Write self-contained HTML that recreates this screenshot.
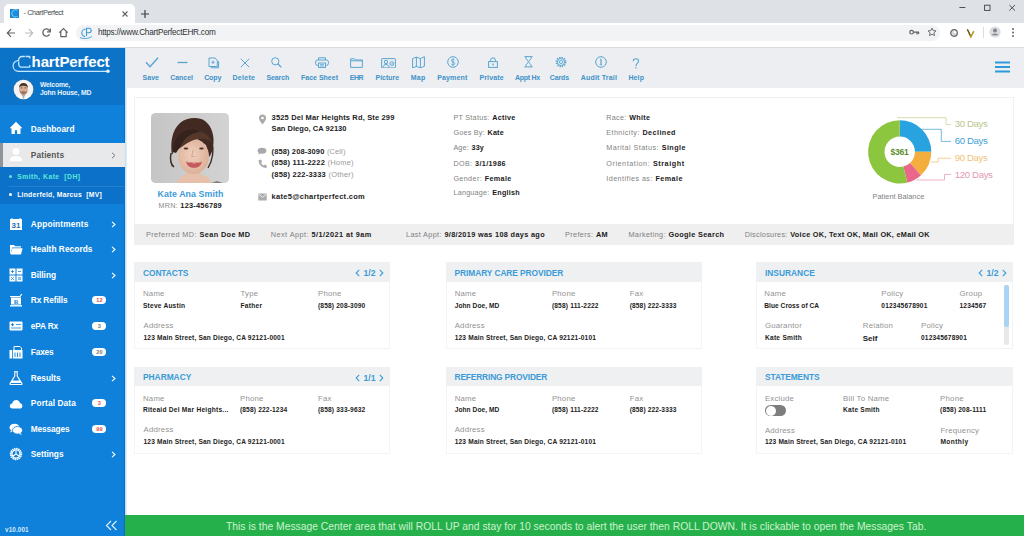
<!DOCTYPE html>
<html><head><meta charset="utf-8">
<style>
*{margin:0;padding:0;box-sizing:border-box}
html,body{width:1024px;height:536px;overflow:hidden;background:#fff;font-family:"Liberation Sans",sans-serif}
.a{position:absolute;white-space:nowrap}
#tabbar{position:absolute;left:0;top:0;width:1024px;height:23px;background:#dee1e6}
#tab{position:absolute;left:4px;top:4px;width:131px;height:19px;background:#fff;border-radius:5px 5px 0 0}
#addr{position:absolute;left:0;top:23px;width:1024px;height:25px;background:#fff;border-bottom:1px solid #d9dbde}
#url{position:absolute;left:76px;top:24.5px;width:864px;height:16px;background:#f1f3f4;border-radius:8px}
#side{position:absolute;left:0;top:48px;width:125px;height:488px;background:#0f81db}
#sidehead{position:absolute;left:0;top:48px;width:125px;height:57px;background:#0c74c8}
#toolbar{position:absolute;left:125px;top:48px;width:899px;height:40px;background:#edeef1}
.tl{position:absolute;top:73px;font-size:7.5px;font-weight:bold;color:#3b9ad6;transform:translateX(-50%)}
.nav{position:absolute;left:31px;font-size:8.5px;font-weight:bold;color:#fff}
.chev{position:absolute;left:111px;width:5px;height:5px;border-right:1.3px solid #fff;border-top:1.3px solid #fff;transform:rotate(45deg)}
.badge{position:absolute;left:92px;width:14px;height:9px;border-radius:5px;background:#fff;color:#d9534f;font-size:6px;font-weight:bold;text-align:center;line-height:9px}
.lab{color:#8a8a8a}
.val{color:#111;font-weight:bold}
.pi{position:absolute;font-size:8px;white-space:nowrap}
.card{position:absolute;background:#fff;border:1px solid #f0f0f0}
.ch{position:absolute;left:0;top:0;right:0;height:19px;background:#eff0f2}
.ct{position:absolute;left:8px;top:5px;font-size:8.5px;font-weight:bold;color:#3a9ad9}
.cl{position:absolute;font-size:7.5px;color:#9a9a9a;white-space:nowrap}
.cv{position:absolute;font-size:7px;color:#111;font-weight:bold;white-space:nowrap}
.pg{position:absolute;top:4px;font-size:8.5px;font-weight:bold;color:#3a9ad9}
.t{position:absolute;white-space:nowrap;line-height:0}
</style></head><body>
<div id="tabbar"></div>
<div id="tab"></div>
<div id="addr"></div>
<div id="url"></div>

<!-- browser chrome -->
<svg class="a" style="left:10px;top:9px" width="9" height="9" viewBox="0 0 9 9"><rect width="9" height="9" fill="#1f86cf"/><circle cx="5.2" cy="3.9" r="2.6" fill="#1a8fe0"/><path d="M7.6 1.5A3.6 3.6 0 1 0 7.8 7.2" stroke="#62c9f4" stroke-width="1.1" fill="none"/></svg>
<div class="t" style="left:23.6px;top:13.2px;font-size:7.3px;color:#4a4d50;letter-spacing:-0.42px">- ChartPerfect</div>
<svg class="a" style="left:121px;top:10px" width="8" height="8" viewBox="0 0 8 8"><path d="M1.5 1.5l5 5M6.5 1.5l-5 5" stroke="#5f6368" stroke-width="1.1"/></svg>
<svg class="a" style="left:140px;top:9px" width="10" height="10" viewBox="0 0 10 10"><path d="M5 1v8M1 5h8" stroke="#3c4043" stroke-width="1.2"/></svg>
<svg class="a" style="left:6px;top:28px" width="10" height="10" viewBox="0 0 10 10"><path d="M9 5H1.5M5 1.2L1.3 5 5 8.8" stroke="#5f6368" stroke-width="1.2" fill="none"/></svg>
<svg class="a" style="left:24px;top:28px" width="10" height="10" viewBox="0 0 10 10"><path d="M1 5h7.5M5 1.2L8.7 5 5 8.8" stroke="#b8babd" stroke-width="1.2" fill="none"/></svg>
<svg class="a" style="left:41px;top:27px" width="11" height="11" viewBox="0 0 11 11"><path d="M8.8 4.2A3.6 3.6 0 1 0 8.6 7.2" stroke="#5f6368" stroke-width="1.3" fill="none"/><path d="M9.3 1.5v3.3H6" stroke="#5f6368" stroke-width="1.3" fill="none"/></svg>
<svg class="a" style="left:58px;top:27px" width="11" height="11" viewBox="0 0 11 11"><path d="M1.3 5.6L5.5 1.6 9.7 5.6M2.8 4.5V9.6H8.2V4.5" stroke="#5f6368" stroke-width="1.2" fill="none"/></svg>
<svg class="a" style="left:79px;top:27px" width="15" height="12" viewBox="0 0 15 12"><path d="M6.5 2.3A3.6 3.6 0 1 0 6.3 9.5" stroke="#3d9ad8" stroke-width="1.1" fill="none"/><path d="M7.5 9V1.3h2.5a2.2 2.2 0 0 1 0 4.4H7.5" stroke="#3d9ad8" stroke-width="1.1" fill="none"/><path d="M1 10.5c3 1.5 8 1.5 12-1" stroke="#3d9ad8" stroke-width="0.9" fill="none"/></svg>
<div class="t" style="left:97.9px;top:32.9px;font-size:8.2px;color:#303134;letter-spacing:-0.24px">https://www.ChartPerfectEHR.com</div>
<svg class="a" style="left:909px;top:29px" width="11" height="7" viewBox="0 0 11 7"><circle cx="2.6" cy="3.2" r="1.8" stroke="#5f6368" stroke-width="1.2" fill="none"/><path d="M4.4 3.2H10M8 3.2v2.2M9.6 3.2v1.8" stroke="#5f6368" stroke-width="1.2"/></svg>
<svg class="a" style="left:927px;top:27px" width="10" height="10" viewBox="0 0 10 10"><path d="M5 1l1.2 2.6 2.8.3-2.1 1.9.6 2.8L5 7.2 2.5 8.6l.6-2.8L1 3.9l2.8-.3z" stroke="#5f6368" stroke-width="0.9" fill="none"/></svg>
<svg class="a" style="left:950px;top:28.5px" width="8" height="8" viewBox="0 0 8 8"><circle cx="4" cy="4" r="3.3" stroke="#606368" stroke-width="1.2" fill="#d5d7da"/><path d="M4.3 1.6a2.5 2.5 0 0 1 2.1 2.6L4 4z" fill="#fff"/></svg>
<svg class="a" style="left:966px;top:27.5px" width="9" height="10" viewBox="0 0 9 10"><path d="M1.5 1.5l3.3 7.5L7.8 3.2" stroke="#b89a2c" stroke-width="1.6" fill="none"/><path d="M1.3 1.3l3 6" stroke="#5e5330" stroke-width="1.1" fill="none"/></svg>
<div class="a" style="left:983px;top:27px;width:1px;height:11px;background:#dadce0"></div>
<svg class="a" style="left:989px;top:26px" width="12" height="12" viewBox="0 0 12 12"><circle cx="6" cy="6" r="5.6" fill="#dadce0"/><circle cx="6" cy="4.5" r="2" fill="#80868b"/><path d="M2.4 9.3a4 3 0 0 1 7.2 0" fill="#80868b"/></svg>
<svg class="a" style="left:1011px;top:27px" width="4" height="11" viewBox="0 0 4 11"><circle cx="2" cy="2" r="1" fill="#5f6368"/><circle cx="2" cy="5.5" r="1" fill="#5f6368"/><circle cx="2" cy="9" r="1" fill="#5f6368"/></svg>
<svg class="a" style="left:955px;top:2px" width="64" height="12" viewBox="0 0 64 12"><path d="M4.4 5.5h6" stroke="#3c4043" stroke-width=".9"/><rect x="29.6" y="3.2" width="5.4" height="5.2" stroke="#3c4043" stroke-width=".9" fill="none"/><path d="M54.4 3l5.6 5.6M60 3l-5.6 5.6" stroke="#3c4043" stroke-width=".9"/></svg>
<div id="toolbar"></div>
<svg class="a" style="left:144.50px;top:57.40px" width="14" height="11" viewBox="0 0 14 11"><path d="M1 5.2L5 9.6 13 .8" stroke="#58a5d2" stroke-width="1.4" fill="none"/></svg>
<svg class="a" style="left:176.70px;top:60.80px" width="11" height="3" viewBox="0 0 11 3"><path d="M0.5 1.5h10" stroke="#58a5d2" stroke-width="1.3"/></svg>
<svg class="a" style="left:208.00px;top:56.60px" width="12" height="12" viewBox="0 0 12 12"><path d="M1 1h6l2.3 2.3V9.5H1z" stroke="#58a5d2" stroke-width="1" fill="none"/><path d="M2.8 10.8h7.8V4.2" stroke="#58a5d2" stroke-width="1" fill="none"/><path d="M5 3.5v3.5M3.3 5.2h3.4" stroke="#58a5d2" stroke-width=".9"/></svg>
<svg class="a" style="left:239.60px;top:57.60px" width="10" height="10" viewBox="0 0 10 10"><path d="M.8 .8l8.4 8.4M9.2 .8L.8 9.2" stroke="#58a5d2" stroke-width="1"/></svg>
<svg class="a" style="left:271.30px;top:57.30px" width="11" height="11" viewBox="0 0 11 11"><circle cx="4.3" cy="4.3" r="3.6" stroke="#58a5d2" stroke-width="1" fill="none"/><path d="M6.8 6.8l3.6 3.6" stroke="#58a5d2" stroke-width="1.3"/></svg>
<svg class="a" style="left:314.50px;top:57.00px" width="14" height="11" viewBox="0 0 14 11"><path d="M3.5 3V.8h7V3" stroke="#58a5d2" stroke-width="1" fill="none"/><rect x=".6" y="3" width="12.8" height="5.4" rx="2" stroke="#58a5d2" stroke-width="1" fill="none"/><rect x="3.5" y="6" width="7" height="4.4" stroke="#58a5d2" stroke-width="1" fill="#eceef1"/><path d="M5 7.6h4M5 9h4" stroke="#58a5d2" stroke-width=".8"/></svg>
<svg class="a" style="left:349.80px;top:57.80px" width="13" height="10" viewBox="0 0 13 10"><path d="M.6 .8h4l1 1.2h6.8v7.4H.6z" stroke="#58a5d2" stroke-width="1" fill="none"/><path d="M.6 2.8h11.8" stroke="#58a5d2" stroke-width="1"/></svg>
<svg class="a" style="left:380.50px;top:57.55px" width="15" height="10.5" viewBox="0 0 15 10.5"><rect x=".6" y=".6" width="13.8" height="9.3" rx=".6" stroke="#58a5d2" stroke-width="1" fill="none"/><circle cx="5" cy="4" r="1.7" stroke="#58a5d2" stroke-width="1" fill="none"/><path d="M2 9.5c.3-2 1.4-3 3-3s2.7 1 3 3" stroke="#58a5d2" stroke-width="1" fill="none"/><circle cx="10.8" cy="5.6" r="1.9" stroke="#58a5d2" stroke-width="1" fill="none"/><path d="M10 5.6l.6.6 1-1" stroke="#58a5d2" stroke-width=".8" fill="none"/></svg>
<svg class="a" style="left:411.80px;top:55.55px" width="13" height="12.5" viewBox="0 0 13 12.5"><path d="M.6 2.6l3.8-1.5 4 1.5 4-1.9v9.5l-4 1.8-4-1.6-3.8 1.6z" stroke="#58a5d2" stroke-width="1" fill="none"/><path d="M4.4 1.1v9.7M8.4 2.6v9.5" stroke="#58a5d2" stroke-width="1"/></svg>
<svg class="a" style="left:447.00px;top:56.40px" width="12" height="12" viewBox="0 0 12 12"><circle cx="6" cy="6" r="5.3" stroke="#58a5d2" stroke-width="1" fill="none"/><path d="M7.6 4.3c-.3-.7-.9-1-1.6-1-1 0-1.7.5-1.7 1.3 0 1.8 3.5 1 3.5 2.9 0 .8-.8 1.4-1.8 1.4-.8 0-1.5-.4-1.8-1.1M6 2.2v7.6" stroke="#58a5d2" stroke-width=".9" fill="none"/></svg>
<svg class="a" style="left:487.50px;top:56.90px" width="10" height="11" viewBox="0 0 10 11"><rect x=".6" y="4.6" width="8.8" height="5.8" stroke="#58a5d2" stroke-width="1" fill="none"/><path d="M2.6 4.6V3.2a2.4 2.4 0 0 1 4.8 0v1.4" stroke="#58a5d2" stroke-width="1" fill="none"/><path d="M5 6.6v2" stroke="#58a5d2" stroke-width="1.3"/></svg>
<svg class="a" style="left:524.30px;top:56.45px" width="9" height="11.5" viewBox="0 0 9 11.5"><path d="M.5 .6h8M.5 10.9h8M1.6 .8c0 3 2.9 3.8 2.9 4.9S1.6 7.7 1.6 10.7M7.4 .8c0 3-2.9 3.8-2.9 4.9s2.9 2 2.9 5" stroke="#58a5d2" stroke-width="1" fill="none"/></svg>
<svg class="a" style="left:554.50px;top:56.10px" width="12" height="12" viewBox="0 0 12 12"><circle cx="6" cy="6" r="4.4" stroke="#58a5d2" stroke-width="2" fill="none" stroke-dasharray="1.3 1"/><circle cx="6" cy="6" r="3.5" stroke="#58a5d2" stroke-width=".9" fill="none"/><circle cx="6" cy="6" r="1.6" stroke="#58a5d2" stroke-width=".9" fill="none"/></svg>
<svg class="a" style="left:594.70px;top:56.10px" width="12" height="12" viewBox="0 0 12 12"><circle cx="6" cy="6" r="5.3" stroke="#58a5d2" stroke-width="1" fill="none"/><path d="M6 3.2v5.6" stroke="#58a5d2" stroke-width="1.2"/><path d="M5 3.2h1.4M4.8 8.8h2.4" stroke="#58a5d2" stroke-width=".8"/></svg>
<svg class="a" style="left:631.80px;top:57.50px" width="8" height="11" viewBox="0 0 8 11"><path d="M1.2 3.2C1.2 1.7 2.3.7 3.9.7s2.7 1 2.7 2.4c0 2-2.6 2.4-2.6 4.5v.7" stroke="#58a5d2" stroke-width="1.1" fill="none"/><circle cx="4" cy="9.9" r=".75" fill="#58a5d2"/></svg>
<div class="t" style="left:142.60px;top:77.60px;font-size:7.0px;font-weight:bold;color:#3d92c8;letter-spacing:0.013px;">Save</div>
<div class="t" style="left:170.20px;top:77.60px;font-size:7.0px;font-weight:bold;color:#3d92c8;letter-spacing:-0.026px;">Cancel</div>
<div class="t" style="left:204.20px;top:77.60px;font-size:7.0px;font-weight:bold;color:#3d92c8;letter-spacing:-0.125px;">Copy</div>
<div class="t" style="left:232.50px;top:77.60px;font-size:7.0px;font-weight:bold;color:#3d92c8;letter-spacing:0.282px;">Delete</div>
<div class="t" style="left:266.40px;top:77.60px;font-size:7.0px;font-weight:bold;color:#3d92c8;letter-spacing:-0.075px;">Search</div>
<div class="t" style="left:301.00px;top:77.60px;font-size:7.0px;font-weight:bold;color:#3d92c8;letter-spacing:0.004px;">Face Sheet</div>
<div class="t" style="left:349.70px;top:77.60px;font-size:7.0px;font-weight:bold;color:#3d92c8;letter-spacing:-0.426px;">EHR</div>
<div class="t" style="left:375.50px;top:77.60px;font-size:7.0px;font-weight:bold;color:#3d92c8;letter-spacing:-0.033px;">Picture</div>
<div class="t" style="left:410.80px;top:77.60px;font-size:7.0px;font-weight:bold;color:#3d92c8;letter-spacing:0.233px;">Map</div>
<div class="t" style="left:437.20px;top:77.60px;font-size:7.0px;font-weight:bold;color:#3d92c8;letter-spacing:0.146px;">Payment</div>
<div class="t" style="left:479.40px;top:77.60px;font-size:7.0px;font-weight:bold;color:#3d92c8;letter-spacing:0.165px;">Private</div>
<div class="t" style="left:515.00px;top:77.60px;font-size:7.0px;font-weight:bold;color:#3d92c8;letter-spacing:-0.290px;">Appt Hx</div>
<div class="t" style="left:549.70px;top:77.60px;font-size:7.0px;font-weight:bold;color:#3d92c8;letter-spacing:-0.088px;">Cards</div>
<div class="t" style="left:580.80px;top:77.60px;font-size:7.0px;font-weight:bold;color:#3d92c8;letter-spacing:0.180px;">Audit Trail</div>
<div class="t" style="left:628.40px;top:77.60px;font-size:7.0px;font-weight:bold;color:#3d92c8;letter-spacing:0.133px;">Help</div>
<svg class="a" style="left:994.5px;top:61px" width="15" height="12" viewBox="0 0 15 12"><path d="M0 1.5h15M0 6h15M0 10.5h15" stroke="#2b9bdb" stroke-width="2"/></svg>
<div style="position:absolute;left:134px;top:97px;width:880px;height:148px;border:1px solid #f0f1f2;background:#fff"></div>
<div style="position:absolute;left:134px;top:224px;width:880px;height:21px;background:#efeff0"></div>
<svg class="a" style="left:151px;top:113px" width="78" height="70" viewBox="0 0 78 70">
<defs><clipPath id="pc"><rect width="78" height="70" rx="4.5"/></clipPath>
<linearGradient id="bgp" x1="0" y1="0" x2="1" y2="0"><stop offset="0" stop-color="#c5c5c6"/><stop offset="1" stop-color="#d3d3d4"/></linearGradient>
<radialGradient id="skin" cx="0.45" cy="0.45" r="0.6"><stop offset="0" stop-color="#f0d0bd"/><stop offset="1" stop-color="#dcae96"/></radialGradient>
<filter id="soft" x="-10%" y="-10%" width="120%" height="120%"><feGaussianBlur stdDeviation="0.6"/></filter></defs>
<g clip-path="url(#pc)">
<rect width="78" height="70" fill="url(#bgp)"/>
<g filter="url(#soft)">
<path d="M26 70c1-4 4-7 9-8l1-6h13l1 6c6 1 9 3 10 8z" fill="#e6c0aa"/>
<path d="M60 70l6-2 6 2z" fill="#8a7f78"/>
<path d="M21 42C19 30 21 17 29 10 35 5 47 3 54 8 61 13 64 24 62 34 61 39 60 42 58 44L55 32 46 26H30L25 34Z" fill="#422c22"/>
<ellipse cx="42.5" cy="43.5" rx="15.5" ry="17.5" fill="url(#skin)"/>
<path d="M25 37c1-10 6-18 16-19 8-1 15 3 18 8l2 3c-4-3-9-4-14-3-6 1-11 4-15 7-3 2-4 3-7 4z" fill="#55392c"/>
<path d="M22 39c0-11 5-20 15-22 5-1 9 0 12 2-8 1-13 4-17 10-3 5-5 8-7 11z" fill="#35241c"/>
<path d="M20 40c-1 6 0 12 3 14" stroke="#3d2920" stroke-width="1.5" fill="none"/>
<path d="M61 30c2 6 1 17-4 25" stroke="#3d2920" stroke-width="1.4" fill="none"/>
<ellipse cx="35" cy="35.5" rx="2.3" ry="1.1" fill="#4a3026"/>
<ellipse cx="50.5" cy="35.5" rx="2.3" ry="1.1" fill="#4a3026"/>
<path d="M42 37l-1.3 6.5h3" stroke="#c99580" stroke-width=".8" fill="none"/>
<path d="M35 48.5c4 1.5 12 1.5 16 0-1 4.5-4 6.3-8 6.3s-7-1.8-8-6.3z" fill="#c45a5c"/>
<path d="M36 49c4 1.3 10 1.3 14 0-.5 1.6-13.5 1.6-14 0z" fill="#f4ebe6"/>
</g>
</g></svg>
<div class="t" style="left:157.50px;top:194.40px;font-size:8.8px;font-weight:bold;color:#3b9bd9;letter-spacing:0.092px;">Kate Ana Smith</div>
<div class="t" style="left:158.60px;top:205.50px;font-size:7.2px;font-weight:normal;color:#888;letter-spacing:0.214px;">MRN:</div>
<div class="t" style="left:180.35px;top:205.50px;font-size:7.4px;font-weight:bold;color:#1a1a1a;letter-spacing:0.214px;">123-456789</div>
<svg class="a" style="left:258px;top:114px" width="9" height="11" viewBox="0 0 9 11"><path d="M4.5 10.5C2 7.3 1 5.6 1 4a3.5 3.5 0 0 1 7 0c0 1.6-1 3.3-3.5 6.5z" fill="#a9a9a9"/><circle cx="4.5" cy="4" r="1.3" fill="#fff"/></svg>
<svg class="a" style="left:257px;top:147px" width="10" height="8" viewBox="0 0 10 8"><ellipse cx="5" cy="3.8" rx="4.4" ry="3" fill="#a9a9a9"/><path d="M2 6l-1 1.6 3-1" fill="#a9a9a9"/></svg>
<svg class="a" style="left:258px;top:159px" width="9" height="9" viewBox="0 0 9 9"><path d="M1.6 .8l1.6 0 .9 2-1 .9c.6 1.3 1.5 2.2 2.8 2.8l.9-1 2 .9v1.6c0 .6-.5.9-1 .9C4 8.6.4 5 .6 1.7c0-.5.4-.9 1-.9z" fill="#ababab"/></svg>
<svg class="a" style="left:258px;top:193px" width="9" height="8" viewBox="0 0 9 8"><rect x=".3" y=".5" width="8.4" height="7" fill="#acacac"/><path d="M.5 1l4 3.3L8.5 1" stroke="#fff" stroke-width=".8" fill="none"/></svg>
<div class="t" style="left:271.60px;top:117.70px;font-size:7.5px;font-weight:bold;color:#222;letter-spacing:0.154px;">3525 Del Mar Heights Rd, Ste 299</div>
<div class="t" style="left:271.60px;top:128.50px;font-size:7.5px;font-weight:bold;color:#222;letter-spacing:0.030px;">San Diego, CA 92130</div>
<div class="t" style="left:271.60px;top:151.50px;font-size:7.5px;font-weight:bold;color:#222;letter-spacing:0.110px;">(858) 208-3090</div>
<div class="t" style="left:326.93px;top:151.50px;font-size:7.5px;font-weight:normal;color:#9a9a9a;letter-spacing:0.110px;">(Cell)</div>
<div class="t" style="left:271.60px;top:163.20px;font-size:7.5px;font-weight:bold;color:#222;letter-spacing:0.212px;">(858) 111-2222</div>
<div class="t" style="left:327.53px;top:163.20px;font-size:7.5px;font-weight:normal;color:#9a9a9a;letter-spacing:0.212px;">(Home)</div>
<div class="t" style="left:271.60px;top:175.00px;font-size:7.5px;font-weight:bold;color:#222;letter-spacing:0.222px;">(858) 222-3333</div>
<div class="t" style="left:328.49px;top:175.00px;font-size:7.5px;font-weight:normal;color:#9a9a9a;letter-spacing:0.222px;">(Other)</div>
<div class="t" style="left:271.60px;top:196.60px;font-size:7.5px;font-weight:bold;color:#222;letter-spacing:0.275px;">kate5@chartperfect.com</div>
<div class="t" style="left:453.40px;top:118.10px;font-size:7.2px;font-weight:normal;color:#828282;letter-spacing:0.275px;">PT Status:</div>
<div class="t" style="left:492.24px;top:118.10px;font-size:7.2px;font-weight:bold;color:#1a1a1a;letter-spacing:0.275px;">Active</div>
<div class="t" style="left:453.40px;top:133.40px;font-size:7.2px;font-weight:normal;color:#828282;letter-spacing:0.232px;">Goes By:</div>
<div class="t" style="left:487.47px;top:133.40px;font-size:7.2px;font-weight:bold;color:#1a1a1a;letter-spacing:0.232px;">Kate</div>
<div class="t" style="left:453.40px;top:148.40px;font-size:7.2px;font-weight:normal;color:#828282;letter-spacing:0.168px;">Age:</div>
<div class="t" style="left:471.48px;top:148.40px;font-size:7.2px;font-weight:bold;color:#1a1a1a;letter-spacing:0.168px;">33y</div>
<div class="t" style="left:453.40px;top:163.60px;font-size:7.2px;font-weight:normal;color:#828282;letter-spacing:0.364px;">DOB:</div>
<div class="t" style="left:475.06px;top:163.60px;font-size:7.2px;font-weight:bold;color:#1a1a1a;letter-spacing:0.364px;">3/1/1986</div>
<div class="t" style="left:453.40px;top:178.50px;font-size:7.2px;font-weight:normal;color:#828282;letter-spacing:0.382px;">Gender:</div>
<div class="t" style="left:484.69px;top:178.50px;font-size:7.2px;font-weight:bold;color:#1a1a1a;letter-spacing:0.382px;">Female</div>
<div class="t" style="left:453.40px;top:193.40px;font-size:7.2px;font-weight:normal;color:#828282;letter-spacing:0.248px;">Language:</div>
<div class="t" style="left:492.26px;top:193.40px;font-size:7.2px;font-weight:bold;color:#1a1a1a;letter-spacing:0.248px;">English</div>
<div class="t" style="left:606.25px;top:118.10px;font-size:7.2px;font-weight:normal;color:#828282;letter-spacing:0.305px;">Race:</div>
<div class="t" style="left:629.18px;top:118.10px;font-size:7.2px;font-weight:bold;color:#1a1a1a;letter-spacing:0.305px;">White</div>
<div class="t" style="left:606.25px;top:133.40px;font-size:7.2px;font-weight:normal;color:#828282;letter-spacing:0.441px;">Ethnicity:</div>
<div class="t" style="left:642.47px;top:133.40px;font-size:7.2px;font-weight:bold;color:#1a1a1a;letter-spacing:0.441px;">Declined</div>
<div class="t" style="left:606.25px;top:148.40px;font-size:7.2px;font-weight:normal;color:#828282;letter-spacing:0.454px;">Marital Status:</div>
<div class="t" style="left:661.67px;top:148.40px;font-size:7.2px;font-weight:bold;color:#1a1a1a;letter-spacing:0.454px;">Single</div>
<div class="t" style="left:606.25px;top:163.60px;font-size:7.2px;font-weight:normal;color:#828282;letter-spacing:0.571px;">Orientation:</div>
<div class="t" style="left:652.93px;top:163.60px;font-size:7.2px;font-weight:bold;color:#1a1a1a;letter-spacing:0.571px;">Straight</div>
<div class="t" style="left:606.25px;top:178.50px;font-size:7.2px;font-weight:normal;color:#828282;letter-spacing:0.446px;">Identifies as:</div>
<div class="t" style="left:655.51px;top:178.50px;font-size:7.2px;font-weight:bold;color:#1a1a1a;letter-spacing:0.446px;">Female</div>
<div class="t" style="left:146.00px;top:234.50px;font-size:7.3px;font-weight:normal;color:#808080;letter-spacing:0.392px;">Preferred MD:</div>
<div class="t" style="left:199.54px;top:234.50px;font-size:7.3px;font-weight:bold;color:#1a1a1a;letter-spacing:0.392px;">Sean Doe MD</div>
<div class="t" style="left:270.80px;top:234.50px;font-size:7.3px;font-weight:normal;color:#808080;letter-spacing:0.444px;">Next Appt:</div>
<div class="t" style="left:311.52px;top:234.50px;font-size:7.3px;font-weight:bold;color:#1a1a1a;letter-spacing:0.444px;">5/1/2021 at 9am</div>
<div class="t" style="left:406.00px;top:234.50px;font-size:7.3px;font-weight:normal;color:#808080;letter-spacing:0.337px;">Last Appt:</div>
<div class="t" style="left:444.44px;top:234.50px;font-size:7.3px;font-weight:bold;color:#1a1a1a;letter-spacing:0.337px;">9/8/2019 was 108 days ago</div>
<div class="t" style="left:565.00px;top:234.50px;font-size:7.3px;font-weight:normal;color:#808080;letter-spacing:0.349px;">Prefers:</div>
<div class="t" style="left:595.95px;top:234.50px;font-size:7.3px;font-weight:bold;color:#1a1a1a;letter-spacing:0.349px;">AM</div>
<div class="t" style="left:628.40px;top:234.50px;font-size:7.3px;font-weight:normal;color:#808080;letter-spacing:0.339px;">Marketing:</div>
<div class="t" style="left:668.47px;top:234.50px;font-size:7.3px;font-weight:bold;color:#1a1a1a;letter-spacing:0.339px;">Google Search</div>
<div class="t" style="left:744.70px;top:234.50px;font-size:7.3px;font-weight:normal;color:#808080;letter-spacing:0.269px;">Disclosures:</div>
<div class="t" style="left:790.28px;top:234.50px;font-size:7.3px;font-weight:bold;color:#1a1a1a;letter-spacing:0.269px;">Voice OK, Text OK, Mail OK, eMail OK</div>
<svg style="position:absolute;left:0;top:0" width="1024" height="536"><path d="M899.70 120.20A31.6 31.6 0 0 1 931.30 151.80L914.90 151.80A15.2 15.2 0 0 0 899.70 136.60z" fill="#29a3e0"/><path d="M931.30 151.80A31.6 31.6 0 0 1 921.01 175.14L909.95 163.02A15.2 15.2 0 0 0 914.90 151.80z" fill="#f4ae3d"/><path d="M921.01 175.14A31.6 31.6 0 0 1 907.34 182.46L903.38 166.55A15.2 15.2 0 0 0 909.95 163.02z" fill="#e9678a"/><path d="M907.34 182.46A31.6 31.6 0 1 1 899.70 120.20L899.70 136.60A15.2 15.2 0 1 0 903.38 166.55z" fill="#8cc63f"/><path d="M897 117.7H946V124.6H951" stroke="#c5d49a" stroke-width="0.8" fill="none"/><path d="M922 129.3H941.3V141.4H951" stroke="#55a9d6" stroke-width="0.8" fill="none"/><path d="M931 162H938V158.2H951" stroke="#f2c47a" stroke-width="0.8" fill="none"/><path d="M916.5 180H944.5V174.4H951" stroke="#e7a0b4" stroke-width="0.8" fill="none"/></svg>
<div class="t" style="left:890.40px;top:152.20px;font-size:8.6px;font-weight:bold;color:#5e8c2c;letter-spacing:-0.208px;">$361</div>
<div class="t" style="left:954.70px;top:123.50px;font-size:9.6px;font-weight:normal;color:#b8c68a;letter-spacing:-0.360px;">30 Days</div>
<div class="t" style="left:954.70px;top:141.00px;font-size:9.6px;font-weight:normal;color:#3fa2d8;letter-spacing:-0.360px;">60 Days</div>
<div class="t" style="left:954.70px;top:158.00px;font-size:9.6px;font-weight:normal;color:#f0c27a;letter-spacing:-0.360px;">90 Days</div>
<div class="t" style="left:954.70px;top:175.00px;font-size:9.6px;font-weight:normal;color:#e39ab0;letter-spacing:-0.332px;">120 Days</div>
<div class="t" style="left:872.60px;top:196.80px;font-size:7.4px;font-weight:normal;color:#808080;letter-spacing:-0.009px;">Patient Balance</div>
<div style="position:absolute;left:134px;top:262px;width:256px;height:87px;border:1px solid #f3f4f5;background:#fff"></div>
<div style="position:absolute;left:134px;top:262px;width:256px;height:19.5px;background:#eff0f2"></div>
<div class="t" style="left:143.00px;top:272.90px;font-size:8.4px;font-weight:bold;color:#3a9bd8;letter-spacing:-0.093px;">CONTACTS</div>
<svg class="a" style="left:355px;top:269px" width="29" height="8" viewBox="0 0 29 8"><path d="M4.2 .8L1.2 4l3 3.2M24.8 .8L27.8 4l-3 3.2" stroke="#3a9bd8" stroke-width="1.1" fill="none"/></svg>
<div class="t" style="left:369.50px;top:273.00px;font-size:8.6px;font-weight:bold;color:#3a9bd8;letter-spacing:0.000px;transform:translateX(-50%)">1/2</div>
<div style="position:absolute;left:134px;top:366.5px;width:256px;height:87px;border:1px solid #f3f4f5;background:#fff"></div>
<div style="position:absolute;left:134px;top:366.5px;width:256px;height:19.5px;background:#eff0f2"></div>
<div class="t" style="left:143.00px;top:377.40px;font-size:8.4px;font-weight:bold;color:#3a9bd8;letter-spacing:-0.017px;">PHARMACY</div>
<svg class="a" style="left:355px;top:373.5px" width="29" height="8" viewBox="0 0 29 8"><path d="M4.2 .8L1.2 4l3 3.2M24.8 .8L27.8 4l-3 3.2" stroke="#3a9bd8" stroke-width="1.1" fill="none"/></svg>
<div class="t" style="left:369.50px;top:377.50px;font-size:8.6px;font-weight:bold;color:#3a9bd8;letter-spacing:0.000px;transform:translateX(-50%)">1/1</div>
<div style="position:absolute;left:445.5px;top:262px;width:256px;height:87px;border:1px solid #f3f4f5;background:#fff"></div>
<div style="position:absolute;left:445.5px;top:262px;width:256px;height:19.5px;background:#eff0f2"></div>
<div class="t" style="left:454.50px;top:272.90px;font-size:8.4px;font-weight:bold;color:#3a9bd8;letter-spacing:-0.072px;">PRIMARY CARE PROVIDER</div>
<div style="position:absolute;left:445.5px;top:366.5px;width:256px;height:87px;border:1px solid #f3f4f5;background:#fff"></div>
<div style="position:absolute;left:445.5px;top:366.5px;width:256px;height:19.5px;background:#eff0f2"></div>
<div class="t" style="left:454.50px;top:377.40px;font-size:8.4px;font-weight:bold;color:#3a9bd8;letter-spacing:-0.154px;">REFERRING PROVIDER</div>
<div style="position:absolute;left:756px;top:262px;width:257px;height:87px;border:1px solid #f3f4f5;background:#fff"></div>
<div style="position:absolute;left:756px;top:262px;width:257px;height:19.5px;background:#eff0f2"></div>
<div class="t" style="left:765.00px;top:272.90px;font-size:8.4px;font-weight:bold;color:#3a9bd8;letter-spacing:-0.004px;">INSURANCE</div>
<svg class="a" style="left:978px;top:269px" width="29" height="8" viewBox="0 0 29 8"><path d="M4.2 .8L1.2 4l3 3.2M24.8 .8L27.8 4l-3 3.2" stroke="#3a9bd8" stroke-width="1.1" fill="none"/></svg>
<div class="t" style="left:992.50px;top:273.00px;font-size:8.6px;font-weight:bold;color:#3a9bd8;letter-spacing:0.000px;transform:translateX(-50%)">1/2</div>
<div style="position:absolute;left:756px;top:366.5px;width:257px;height:87px;border:1px solid #f3f4f5;background:#fff"></div>
<div style="position:absolute;left:756px;top:366.5px;width:257px;height:19.5px;background:#eff0f2"></div>
<div class="t" style="left:765.00px;top:377.40px;font-size:8.4px;font-weight:bold;color:#3a9bd8;letter-spacing:-0.099px;">STATEMENTS</div>
<div class="t" style="left:143.00px;top:294.30px;font-size:7.8px;font-weight:normal;color:#939393;letter-spacing:0.220px;">Name</div>
<div class="t" style="left:240.50px;top:294.30px;font-size:7.8px;font-weight:normal;color:#939393;letter-spacing:0.220px;">Type</div>
<div class="t" style="left:318.00px;top:294.30px;font-size:7.8px;font-weight:normal;color:#939393;letter-spacing:0.220px;">Phone</div>
<div class="t" style="left:143.00px;top:305.70px;font-size:6.6px;font-weight:bold;color:#1c1c1c;letter-spacing:0.206px;">Steve Austin</div>
<div class="t" style="left:240.50px;top:305.70px;font-size:6.6px;font-weight:bold;color:#1c1c1c;letter-spacing:0.288px;">Father</div>
<div class="t" style="left:318.00px;top:305.70px;font-size:6.6px;font-weight:bold;color:#1c1c1c;letter-spacing:0.169px;">(858) 208-3090</div>
<div class="t" style="left:143.50px;top:326.00px;font-size:7.8px;font-weight:normal;color:#939393;letter-spacing:0.220px;">Address</div>
<div class="t" style="left:143.50px;top:337.70px;font-size:6.6px;font-weight:bold;color:#1c1c1c;letter-spacing:0.171px;">123 Main Street, San Diego, CA 92121-0001</div>
<div class="t" style="left:143.00px;top:398.50px;font-size:7.8px;font-weight:normal;color:#939393;letter-spacing:0.220px;">Name</div>
<div class="t" style="left:240.00px;top:398.50px;font-size:7.8px;font-weight:normal;color:#939393;letter-spacing:0.220px;">Phone</div>
<div class="t" style="left:318.00px;top:398.50px;font-size:7.8px;font-weight:normal;color:#939393;letter-spacing:0.220px;">Fax</div>
<div class="t" style="left:143.00px;top:410.10px;font-size:6.6px;font-weight:bold;color:#1c1c1c;letter-spacing:0.246px;">Riteaid Del Mar Heights...</div>
<div class="t" style="left:239.90px;top:410.10px;font-size:6.6px;font-weight:bold;color:#1c1c1c;letter-spacing:0.169px;">(858) 222-1234</div>
<div class="t" style="left:318.00px;top:410.10px;font-size:6.6px;font-weight:bold;color:#1c1c1c;letter-spacing:0.169px;">(858) 333-9632</div>
<div class="t" style="left:143.50px;top:429.90px;font-size:7.8px;font-weight:normal;color:#939393;letter-spacing:0.220px;">Address</div>
<div class="t" style="left:143.50px;top:442.10px;font-size:6.6px;font-weight:bold;color:#1c1c1c;letter-spacing:0.171px;">123 Main Street, San Diego, CA 92121-0001</div>
<div class="t" style="left:454.70px;top:294.30px;font-size:7.8px;font-weight:normal;color:#939393;letter-spacing:0.220px;">Name</div>
<div class="t" style="left:551.90px;top:294.30px;font-size:7.8px;font-weight:normal;color:#939393;letter-spacing:0.220px;">Phone</div>
<div class="t" style="left:629.70px;top:294.30px;font-size:7.8px;font-weight:normal;color:#939393;letter-spacing:0.220px;">Fax</div>
<div class="t" style="left:454.70px;top:305.70px;font-size:6.6px;font-weight:bold;color:#1c1c1c;letter-spacing:0.058px;">John Doe, MD</div>
<div class="t" style="left:551.90px;top:305.70px;font-size:6.6px;font-weight:bold;color:#1c1c1c;letter-spacing:0.175px;">(858) 111-2222</div>
<div class="t" style="left:629.70px;top:305.70px;font-size:6.6px;font-weight:bold;color:#1c1c1c;letter-spacing:0.126px;">(858) 222-3333</div>
<div class="t" style="left:454.70px;top:326.00px;font-size:7.8px;font-weight:normal;color:#939393;letter-spacing:0.220px;">Address</div>
<div class="t" style="left:454.70px;top:337.70px;font-size:6.6px;font-weight:bold;color:#1c1c1c;letter-spacing:0.175px;">123 Main Street, San Diego, CA 92121-0101</div>
<div class="t" style="left:454.70px;top:398.50px;font-size:7.8px;font-weight:normal;color:#939393;letter-spacing:0.220px;">Name</div>
<div class="t" style="left:551.90px;top:398.50px;font-size:7.8px;font-weight:normal;color:#939393;letter-spacing:0.220px;">Phone</div>
<div class="t" style="left:629.70px;top:398.50px;font-size:7.8px;font-weight:normal;color:#939393;letter-spacing:0.220px;">Fax</div>
<div class="t" style="left:454.70px;top:410.10px;font-size:6.6px;font-weight:bold;color:#1c1c1c;letter-spacing:0.058px;">John Doe, MD</div>
<div class="t" style="left:551.90px;top:410.10px;font-size:6.6px;font-weight:bold;color:#1c1c1c;letter-spacing:0.175px;">(858) 111-2222</div>
<div class="t" style="left:629.70px;top:410.10px;font-size:6.6px;font-weight:bold;color:#1c1c1c;letter-spacing:0.126px;">(858) 222-3333</div>
<div class="t" style="left:454.70px;top:429.90px;font-size:7.8px;font-weight:normal;color:#939393;letter-spacing:0.220px;">Address</div>
<div class="t" style="left:454.70px;top:442.10px;font-size:6.6px;font-weight:bold;color:#1c1c1c;letter-spacing:0.175px;">123 Main Street, San Diego, CA 92121-0101</div>
<div class="t" style="left:764.30px;top:294.30px;font-size:7.8px;font-weight:normal;color:#939393;letter-spacing:0.220px;">Name</div>
<div class="t" style="left:881.30px;top:294.30px;font-size:7.8px;font-weight:normal;color:#939393;letter-spacing:0.220px;">Policy</div>
<div class="t" style="left:959.50px;top:294.30px;font-size:7.8px;font-weight:normal;color:#939393;letter-spacing:0.220px;">Group</div>
<div class="t" style="left:764.30px;top:305.70px;font-size:6.6px;font-weight:bold;color:#1c1c1c;letter-spacing:0.039px;">Blue Cross of CA</div>
<div class="t" style="left:881.30px;top:305.70px;font-size:6.6px;font-weight:bold;color:#1c1c1c;letter-spacing:0.188px;">012345678901</div>
<div class="t" style="left:959.50px;top:305.70px;font-size:6.6px;font-weight:bold;color:#1c1c1c;letter-spacing:0.172px;">1234567</div>
<div class="t" style="left:764.90px;top:326.20px;font-size:7.8px;font-weight:normal;color:#939393;letter-spacing:0.220px;">Guarantor</div>
<div class="t" style="left:862.80px;top:326.20px;font-size:7.8px;font-weight:normal;color:#939393;letter-spacing:0.220px;">Relation</div>
<div class="t" style="left:921.00px;top:326.20px;font-size:7.8px;font-weight:normal;color:#939393;letter-spacing:0.220px;">Policy</div>
<div class="t" style="left:764.90px;top:337.50px;font-size:6.6px;font-weight:bold;color:#1c1c1c;letter-spacing:0.283px;">Kate Smith</div>
<div class="t" style="left:862.80px;top:338.50px;font-size:8px;font-weight:bold;color:#1c1c1c;letter-spacing:-0.018px;">Self</div>
<div class="t" style="left:921.00px;top:337.50px;font-size:6.6px;font-weight:bold;color:#1c1c1c;letter-spacing:0.163px;">012345678901</div>
<div style="position:absolute;left:1004px;top:285px;width:4.5px;height:60px;border-radius:2.2px;background:#e8e8e8"></div>
<div style="position:absolute;left:1004px;top:285px;width:4.5px;height:42px;border-radius:2.2px;background:#a9d3f2"></div>
<div class="t" style="left:764.90px;top:398.50px;font-size:7.8px;font-weight:normal;color:#939393;letter-spacing:0.220px;">Exclude</div>
<div class="t" style="left:843.10px;top:398.50px;font-size:7.8px;font-weight:normal;color:#939393;letter-spacing:0.220px;">Bill To Name</div>
<div class="t" style="left:940.10px;top:398.50px;font-size:7.8px;font-weight:normal;color:#939393;letter-spacing:0.220px;">Phone</div>
<div style="position:absolute;left:765px;top:404.7px;width:21px;height:11.5px;border-radius:6px;background:#7d7d7d"></div>
<div style="position:absolute;left:765.8px;top:405.5px;width:10px;height:10px;border-radius:50%;background:#fff"></div>
<div class="t" style="left:843.10px;top:409.80px;font-size:6.6px;font-weight:bold;color:#1c1c1c;letter-spacing:0.223px;">Kate Smith</div>
<div class="t" style="left:940.10px;top:409.80px;font-size:6.6px;font-weight:bold;color:#1c1c1c;letter-spacing:0.161px;">(858) 208-1111</div>
<div class="t" style="left:764.90px;top:430.50px;font-size:7.8px;font-weight:normal;color:#939393;letter-spacing:0.220px;">Address</div>
<div class="t" style="left:940.40px;top:430.50px;font-size:7.8px;font-weight:normal;color:#939393;letter-spacing:0.220px;">Frequency</div>
<div class="t" style="left:764.90px;top:442.20px;font-size:6.6px;font-weight:bold;color:#1c1c1c;letter-spacing:0.174px;">123 Main Street, San Diego, CA 92121-0101</div>
<div class="t" style="left:940.40px;top:442.20px;font-size:6.6px;font-weight:bold;color:#1c1c1c;letter-spacing:0.429px;">Monthly</div>
<div id="side"></div>
<div id="sidehead"></div>
<div style="position:absolute;left:124px;top:48px;width:1px;height:488px;background:#0c6cc0"></div>
<div style="position:absolute;left:125px;top:48px;width:2px;height:488px;background:linear-gradient(90deg,#b6daf6,#eef5fb)"></div>
<svg class="a" style="left:8px;top:50px" width="110" height="28" viewBox="0 0 110 28">
 <path d="M21.8 8.6V7.1Q21.8 6.5 21.2 6.5H14.2Q10.7 6.5 10.7 10V13.7Q10.7 17.2 14.2 17.2H21.2Q21.8 17.2 21.8 16.6V15" stroke="#c4e7ff" stroke-width="1.3" fill="none" stroke-dasharray="6 0.7 9 0.7 20"/>
 <path d="M11 10.3C7.5 10.8 5.1 12.8 5.1 15.8 5.1 19 7.5 21.3 10.5 21.3H99.5" stroke="#c4e7ff" stroke-width="1.2" fill="none"/>
 <circle cx="99.9" cy="21.3" r="1.8" fill="#e6f4fe"/>
</svg>
<div class="t" style="left:31.60px;top:62.00px;font-size:15.0px;font-weight:bold;color:#fff;letter-spacing:-0.118px;">hartPerfect</div>
<svg class="a" style="left:12.6px;top:78.6px" width="21" height="21" viewBox="0 0 21 21">
 <defs><clipPath id="avc"><circle cx="10.5" cy="10.5" r="9.3"/></clipPath></defs>
 <circle cx="10.5" cy="10.5" r="10.3" fill="#3a6f9e"/>
 <circle cx="10.5" cy="10.5" r="9.8" fill="#f1f3f5"/>
 <g clip-path="url(#avc)">
  <rect width="21" height="21" fill="#f4f4f4"/>
  <path d="M3 21c.5-3.5 3-5 7.5-5s7 1.5 7.5 5z" fill="#fafafa"/>
  <path d="M9 16l1.5 5 1.5-5z" fill="#9fb3c8"/>
  <path d="M8.5 14h4v2.4h-4z" fill="#d9a48c"/>
  <ellipse cx="10.5" cy="10.3" rx="4.4" ry="5.3" fill="#dcae96"/>
  <path d="M6 9c0-3.2 1.9-5 4.5-5s4.5 1.8 4.5 5c-.8-1.6-2-2.3-4.5-2.3S6.8 7.4 6 9z" fill="#4a3328"/>
  <path d="M7.6 8.9h1.8M11.6 8.9h1.8" stroke="#4a3328" stroke-width=".7"/>
  <path d="M6.4 11.5c.5 2.8 2 4.1 4.1 4.1s3.6-1.3 4.1-4.1c-.7 1-1.6 1.3-4.1 1.3s-3.4-.3-4.1-1.3z" fill="#9b7a66"/>
  <path d="M9.2 12.6h2.6" stroke="#a0524c" stroke-width=".7"/>
 </g>
</svg>
<div class="t" style="left:39.90px;top:85.40px;font-size:6.8px;font-weight:bold;color:#e8f3fc;letter-spacing:-0.177px;">Welcome,</div>
<div class="t" style="left:39.90px;top:93.00px;font-size:6.8px;font-weight:bold;color:#e8f3fc;letter-spacing:-0.133px;">John House, MD</div>
<svg class="a" style="left:9px;top:121px" width="14" height="14" viewBox="0 0 14 14"><path d="M7 .8L.6 7.2h1.9V13h3.4V9.2h2.2V13h3.4V7.2h1.9z" fill="#fff"/></svg>
<div class="t" style="left:30.80px;top:128.90px;font-size:8.3px;font-weight:bold;color:#fff;letter-spacing:0.039px;">Dashboard</div>
<div style="position:absolute;left:0;top:143px;width:125px;height:24px;background:#e8e9eb"></div>
<div style="position:absolute;left:0;top:143px;width:2.5px;height:24px;background:#8f949a"></div>
<svg class="a" style="left:9px;top:147px" width="14" height="16" viewBox="0 0 14 16"><circle cx="7" cy="4.6" r="3.4" fill="#fff"/><path d="M.5 14.5c0-3.6 2.6-5.5 6.5-5.5s6.5 1.9 6.5 5.5z" fill="#fff"/><path d="M.5 15.3h13" stroke="#dcdcdc" stroke-width=".6"/></svg>
<div class="t" style="left:30.80px;top:155.00px;font-size:8.3px;font-weight:bold;color:#555;letter-spacing:0.139px;">Patients</div>
<svg class="a" style="left:111px;top:151.5px" width="5" height="7" viewBox="0 0 5 7"><path d="M1 .8L4 3.5 1 6.2" stroke="#777" stroke-width="1" fill="none"/></svg>
<div style="position:absolute;left:0;top:167px;width:125px;height:37px;background:#0b71c9"></div>
<div style="position:absolute;left:9px;top:186px;width:116px;height:1px;background:#2580cc"></div>
<div style="position:absolute;left:9.3px;top:175.3px;width:3px;height:3px;border-radius:50%;background:#5ee8d8"></div>
<div class="t" style="left:17.20px;top:177.00px;font-size:6.8px;font-weight:bold;color:#5ee8d8;letter-spacing:0.457px;">Smith, Kate&nbsp; [DH]</div>
<div style="position:absolute;left:9.3px;top:193.3px;width:3px;height:3px;border-radius:50%;background:#fff"></div>
<div class="t" style="left:17.20px;top:195.00px;font-size:6.8px;font-weight:bold;color:#fff;letter-spacing:0.243px;">Linderfeld, Marcus&nbsp; [MV]</div>
<svg class="a" style="left:9px;top:217px" width="14" height="14" viewBox="0 0 14 14"><rect x="1" y="2" width="12" height="11" fill="#fff"/><path d="M3 1v2M11 1v2" stroke="#fff" stroke-width="1"/><text x="7" y="11.3" font-size="8" font-family="Liberation Sans" text-anchor="middle" fill="#2a6fb0" font-weight="bold">31</text></svg>
<div class="t" style="left:30.80px;top:224.00px;font-size:8.3px;font-weight:bold;color:#fff;letter-spacing:0.159px;">Appointments</div>
<svg class="a" style="left:110.8px;top:220.5px" width="5" height="7" viewBox="0 0 5 7"><path d="M1 .8L4 3.5 1 6.2" stroke="#fff" stroke-width="1.1" fill="none"/></svg>
<svg class="a" style="left:9px;top:242px" width="14" height="14" viewBox="0 0 14 14"><path d="M1 3h4l1.2 1.3H12v1.2H3.2L1.5 12H1z" fill="#fff"/><path d="M3.3 6.2H13.6L12 12.4H1.6z" fill="#fff"/></svg>
<div class="t" style="left:30.80px;top:249.00px;font-size:8.3px;font-weight:bold;color:#fff;letter-spacing:0.058px;">Health Records</div>
<svg class="a" style="left:110.8px;top:245.5px" width="5" height="7" viewBox="0 0 5 7"><path d="M1 .8L4 3.5 1 6.2" stroke="#fff" stroke-width="1.1" fill="none"/></svg>
<svg class="a" style="left:9px;top:268px" width="14" height="14" viewBox="0 0 14 14"><rect x="0.5" y="0.5" width="6" height="6" fill="#fff"/><rect x="7.5" y="0.5" width="6" height="6" fill="#fff"/><rect x="0.5" y="7.5" width="6" height="6" fill="#fff"/><rect x="7.5" y="7.5" width="6" height="6" fill="#fff"/><path d="M2 3.5h3M3.5 2v3M9 3.5h3M2.2 9.2l2.6 2.6M4.8 9.2l-2.6 2.6M9 9.8h3M9 11.2h3" stroke="#0f81db" stroke-width=".8"/></svg>
<div class="t" style="left:30.80px;top:275.00px;font-size:8.3px;font-weight:bold;color:#fff;letter-spacing:-0.023px;">Billing</div>
<svg class="a" style="left:110.8px;top:271.5px" width="5" height="7" viewBox="0 0 5 7"><path d="M1 .8L4 3.5 1 6.2" stroke="#fff" stroke-width="1.1" fill="none"/></svg>
<svg class="a" style="left:9px;top:293px" width="14" height="14" viewBox="0 0 14 14"><path d="M1 3.5h10.5M11 3.5l1.8-2.5" stroke="#fff" stroke-width="1.2"/><rect x="2" y="4.5" width="10" height="7" fill="#fff"/><path d="M1 12.8h12" stroke="#fff" stroke-width="1.4"/><text x="7" y="10.5" font-size="6.5" font-family="Liberation Serif" text-anchor="middle" fill="#0f81db" font-weight="bold">R</text></svg>
<div class="t" style="left:30.80px;top:300.00px;font-size:8.3px;font-weight:bold;color:#fff;letter-spacing:-0.112px;">Rx Refills</div>
<div style="position:absolute;left:92.3px;top:296.3px;width:14.2px;height:7.4px;border-radius:3.7px;background:#fff"></div>
<div class="t" style="left:99.40px;top:300.00px;font-size:5.6px;font-weight:bold;color:#d9534f;letter-spacing:0.000px;transform:translateX(-50%)">12</div>
<svg class="a" style="left:9px;top:319px" width="14" height="14" viewBox="0 0 14 14"><rect x="0.5" y="2.5" width="13" height="9" rx="1" fill="#fff"/><path d="M2 9h10" stroke="#0f81db" stroke-width=".8"/><path d="M3.5 4.2v3M2 5.7h3" stroke="#0f81db" stroke-width="1"/><path d="M7 5.5h5" stroke="#0f81db" stroke-width=".8"/></svg>
<div class="t" style="left:30.80px;top:326.00px;font-size:8.3px;font-weight:bold;color:#fff;letter-spacing:-0.156px;">ePA Rx</div>
<div style="position:absolute;left:92.3px;top:322.3px;width:14.2px;height:7.4px;border-radius:3.7px;background:#fff"></div>
<div class="t" style="left:99.40px;top:326.00px;font-size:5.6px;font-weight:bold;color:#777;letter-spacing:0.000px;transform:translateX(-50%)">3</div>
<svg class="a" style="left:9px;top:345px" width="14" height="14" viewBox="0 0 14 14"><rect x="0.5" y="5" width="2.5" height="8.5" fill="#fff"/><rect x="3.8" y="5" width="9.7" height="8.5" fill="#fff"/><path d="M5 5V1.5h6l1.5 1.5V5" stroke="#fff" stroke-width="1" fill="none"/><path d="M6 7.5v4.5M8.5 7.5v4.5M11 7.5v4.5" stroke="#0f81db" stroke-width=".9"/></svg>
<div class="t" style="left:30.80px;top:352.00px;font-size:8.3px;font-weight:bold;color:#fff;letter-spacing:-0.167px;">Faxes</div>
<div style="position:absolute;left:92.3px;top:348.3px;width:14.2px;height:7.4px;border-radius:3.7px;background:#fff"></div>
<div class="t" style="left:99.40px;top:352.00px;font-size:5.6px;font-weight:bold;color:#777;letter-spacing:0.000px;transform:translateX(-50%)">20</div>
<svg class="a" style="left:9px;top:371px" width="14" height="14" viewBox="0 0 14 14"><path d="M5 .8h4M5.8 1v4L1.2 12.2c-.4.7 0 1.3.8 1.3h10c.8 0 1.2-.6.8-1.3L8.2 5V1" stroke="#fff" stroke-width="1.1" fill="none"/><path d="M3 9.5h8l1.3 2.5H1.7z" fill="#fff"/></svg>
<div class="t" style="left:30.80px;top:378.00px;font-size:8.3px;font-weight:bold;color:#fff;letter-spacing:-0.040px;">Results</div>
<svg class="a" style="left:110.8px;top:374.5px" width="5" height="7" viewBox="0 0 5 7"><path d="M1 .8L4 3.5 1 6.2" stroke="#fff" stroke-width="1.1" fill="none"/></svg>
<svg class="a" style="left:9px;top:396px" width="14" height="14" viewBox="0 0 14 14"><path d="M3.5 12.5C1.8 12.5.8 11.3.8 10c0-1.4 1-2.4 2.4-2.5C3.5 5.4 5.2 4 7.2 4c2 0 3.6 1.4 3.9 3.3 1.3.2 2.3 1.2 2.3 2.6 0 1.5-1.1 2.6-2.6 2.6z" fill="#fff"/></svg>
<div class="t" style="left:30.80px;top:403.00px;font-size:8.3px;font-weight:bold;color:#fff;letter-spacing:0.126px;">Portal Data</div>
<div style="position:absolute;left:92.3px;top:399.3px;width:14.2px;height:7.4px;border-radius:3.7px;background:#fff"></div>
<div class="t" style="left:99.40px;top:403.00px;font-size:5.6px;font-weight:bold;color:#d9534f;letter-spacing:0.000px;transform:translateX(-50%)">3</div>
<svg class="a" style="left:9px;top:422px" width="14" height="14" viewBox="0 0 14 14"><ellipse cx="5.5" cy="5.5" rx="5" ry="3.8" fill="#fff"/><path d="M2 8.5L1 10.5l3-1.2" fill="#fff"/><ellipse cx="8.5" cy="8.3" rx="5" ry="3.8" fill="#fff" stroke="#0f81db" stroke-width=".8"/><path d="M11.5 11l1.5 2-3.2-1.2" fill="#fff"/></svg>
<div class="t" style="left:30.80px;top:429.00px;font-size:8.3px;font-weight:bold;color:#fff;letter-spacing:-0.123px;">Messages</div>
<div style="position:absolute;left:92.3px;top:425.3px;width:14.2px;height:7.4px;border-radius:3.7px;background:#fff"></div>
<div class="t" style="left:99.40px;top:429.00px;font-size:5.6px;font-weight:bold;color:#d9534f;letter-spacing:0.000px;transform:translateX(-50%)">99</div>
<svg class="a" style="left:9px;top:447px" width="14" height="14" viewBox="0 0 14 14"><circle cx="7" cy="7" r="5.2" stroke="#fff" stroke-width="2" fill="none" stroke-dasharray="1.4 .6"/><circle cx="7" cy="7" r="4" stroke="#fff" stroke-width="1.2" fill="none"/><path d="M7 7V3.5M7 7L4 9M7 7l3 2" stroke="#fff" stroke-width="1.1"/></svg>
<div class="t" style="left:30.80px;top:454.00px;font-size:8.3px;font-weight:bold;color:#fff;letter-spacing:-0.005px;">Settings</div>
<svg class="a" style="left:110.8px;top:450.5px" width="5" height="7" viewBox="0 0 5 7"><path d="M1 .8L4 3.5 1 6.2" stroke="#fff" stroke-width="1.1" fill="none"/></svg>
<div class="t" style="left:5.00px;top:529.60px;font-size:6.3px;font-weight:bold;color:#d6e9fa;letter-spacing:0.132px;">v10.001</div>
<svg class="a" style="left:105px;top:520.2px" width="13" height="11" viewBox="0 0 13 11"><path d="M6 1L1.5 5.5 6 10M11.5 1L7 5.5 11.5 10" stroke="#e6f2fc" stroke-width="1.1" fill="none"/></svg>
<div style="position:absolute;left:125px;top:515px;width:899px;height:21px;background:#26b04b"></div>
<div class="a" style="left:226px;top:520.5px;font-size:10.35px;color:#cdf3cf">This is the Message Center area that will ROLL UP and stay for 10 seconds to alert the user then ROLL DOWN. It is clickable to open the Messages Tab.</div>
</body></html>
